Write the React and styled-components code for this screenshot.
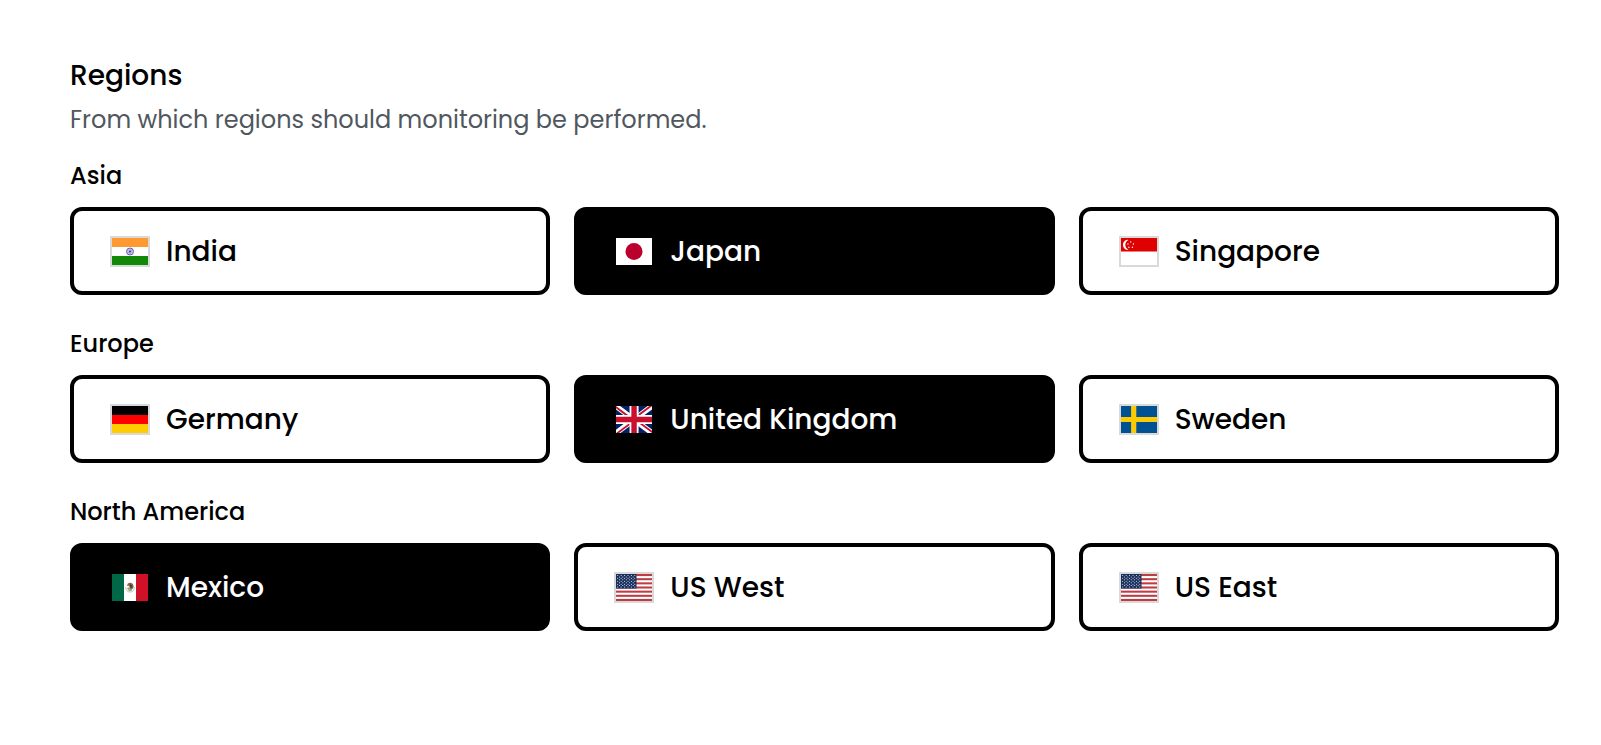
import React from "react";
import styled, { createGlobalStyle } from "styled-components";

const GlobalStyle = createGlobalStyle`
  *, *::before, *::after { box-sizing: border-box; }
  body {
    margin: 0;
    background: #fff;
    color: #000;
    font-family: Poppins, Inter, "Liberation Sans", sans-serif;
  }
`;

const Page = styled.main`
  width: 1601px;
  padding: 55px 42px 0 70px;
`;

const Header = styled.header`
  display: flex;
  flex-direction: column;
  gap: 5px;
  margin-bottom: 20px;
`;

const Title = styled.h1`
  margin: 0;
  font-size: 28px;
  line-height: 42px;
  font-weight: 500;
`;

const Description = styled.p`
  margin: 0;
  font-size: 24px;
  line-height: 36px;
  font-weight: 400;
  color: #50575e;
`;

const Groups = styled.div`
  display: flex;
  flex-direction: column;
  gap: 31px;
`;

const Group = styled.section`
  display: flex;
  flex-direction: column;
  gap: 13px;
`;

const GroupName = styled.h2`
  margin: 0;
  font-size: 24px;
  line-height: 36px;
  font-weight: 500;
`;

const Cards = styled.div`
  display: grid;
  grid-template-columns: repeat(3, 1fr);
  gap: 24px;
`;

const Card = styled.button`
  display: flex;
  align-items: center;
  gap: 16px;
  height: 88px;
  margin: 0;
  padding: 0 36px;
  border: 4px solid #000;
  border-radius: 12px;
  font: inherit;
  text-align: left;
  cursor: pointer;
  background: ${({ $selected }) => ($selected ? "#000" : "#fff")};
  color: ${({ $selected }) => ($selected ? "#fff" : "#000")};
`;

const FlagFrame = styled.span`
  display: block;
  flex: none;
  width: 40px;
  height: 31px;
  border: 2px solid ${({ $selected }) => ($selected ? "#000" : "#d9d9d9")};

  svg {
    display: block;
    width: 36px;
    height: 27px;
  }
`;

const CardLabel = styled.span`
  padding-top: 2px;
  font-size: 28px;
  line-height: 42px;
  font-weight: 500;
  white-space: nowrap;
`;

const India = () => (
  <svg viewBox="0 0 36 27">
    <path fill="#fff" d="M0 0h36v27H0z" />
    <path fill="#ff9932" d="M0 0h36v9H0z" />
    <path fill="#128807" d="M0 18h36v9H0z" />
    <circle cx="18" cy="13.5" r="3.5" fill="#d8d8f0" stroke="#5050a4" strokeWidth="0.9" />
    <circle cx="18" cy="13.5" r="2" fill="none" stroke="#8c8cc8" strokeWidth="1.5" strokeDasharray="0.5 0.55" />
    <circle cx="18" cy="13.5" r="1.1" fill="#3a3a9a" />
  </svg>
);

const Japan = () => (
  <svg viewBox="0 0 36 27">
    <path fill="#fff" d="M0 0h36v27H0z" />
    <circle cx="18" cy="13.5" r="8.5" fill="#bc002d" />
  </svg>
);

const Singapore = () => (
  <svg viewBox="0 0 36 27">
    <path fill="#fff" d="M0 0h36v27H0z" />
    <path fill="#df0000" d="M0 0h36v13.5H0z" />
    <path fill="#fff" d="M7.600 1.900a5 5 0 1 0 0 9.900 5.400 5.400 0 0 1 0-9.900z" />
    <g fill="#fff">
      <circle cx="9.600" cy="3.900" r="0.7" />
      <circle cx="12.400" cy="6" r="0.7" />
      <circle cx="11.400" cy="9.200" r="0.7" />
      <circle cx="7.900" cy="9.200" r="0.7" />
      <circle cx="6.900" cy="6" r="0.7" />
    </g>
  </svg>
);

const Germany = () => (
  <svg viewBox="0 0 36 27">
    <path fill="#000" d="M0 0h36v9H0z" />
    <path fill="#f00" d="M0 9h36v9H0z" />
    <path fill="#fc0" d="M0 18h36v9H0z" />
  </svg>
);

const UnitedKingdom = () => (
  <svg viewBox="0 0 640 480">
    <path fill="#012169" d="M0 0h640v480H0z" />
    <path
      fill="#fff"
      d="m75 0 244 181L562 0h78v62L400 241l240 178v61h-80L320 301 81 480H0v-60l239-178L0 64V0z"
    />
    <path
      fill="#c8102e"
      d="m424 281 216 159v40L369 281zm-184 20 6 35L54 480H0zM640 0v3L391 191l2-44L590 0zM0 0l239 176h-60L0 42z"
    />
    <path fill="#fff" d="M241 0v480h160V0zM0 160v160h640V160z" />
    <path fill="#c8102e" d="M0 193v96h640v-96zM273 0v480h96V0z" />
  </svg>
);

const Sweden = () => (
  <svg viewBox="0 0 36 27">
    <path fill="#005293" d="M0 0h36v27H0z" />
    <path fill="#fecb00" d="M10.100 0h5.200v27h-5.200zM0 10.900h36v5.200H0z" />
  </svg>
);

const Mexico = () => (
  <svg viewBox="0 0 36 27">
    <path fill="#fff" d="M0 0h36v27H0z" />
    <path fill="#006847" d="M0 0h12v27H0z" />
    <path fill="#ce1126" d="M24 0h12v27H24z" />
    <path fill="none" stroke="#a9bba6" strokeWidth="0.9" d="M13.600 13.300c.4 3.200 2.100 4.700 4.500 4.700s4-1.500 4.400-4.700" />
    <path fill="#8a6a44" d="M15.800 9.600c1.700-1.200 3.900-.9 5 .5 1.200 1.700 1 3.900-.4 4.800-1.300.9-2.700.5-3.700-.5l1.200-1.300-1.500-1.300-1.400.3z" />
    <path fill="#45443a" d="m18 9.800 2.700 2.100-.7 2.200-2.200-1.200z" />
    <path fill="#c99a4e" d="m14.800 14 1.900-.8 1.200 1.300-1.700 1z" />
    <path fill="#57908a" d="M15.900 15.600h4.300l-.8 1.200h-2.700z" />
  </svg>
);

const starRows = Array.from({ length: 9 }, (_, row) =>
  Array.from({ length: row % 2 ? 5 : 6 }, (_, col) => ({
    x: 1.71 * (2 * col + 1 + (row % 2)),
    y: 1.45 * (row + 1),
  }))
).flat();

const UnitedStates = () => (
  <svg viewBox="0 0 36 27">
    <path fill="#fff" d="M0 0h36v27H0z" />
    {[0, 2, 4, 6, 8, 10, 12].map((stripe) => (
      <rect key={stripe} y={(stripe * 27) / 13} width="36" height={27 / 13} fill="#bd3d44" />
    ))}
    <path fill="#192f5d" d="M0 0h20.520v14.540H0z" />
    {starRows.map(({ x, y }) => (
      <circle key={`${x}-${y}`} cx={x} cy={y} r="0.5" fill="#fff" />
    ))}
  </svg>
);

const continents = [
  {
    name: "Asia",
    regions: [
      { name: "India", Flag: India },
      { name: "Japan", Flag: Japan, selected: true },
      { name: "Singapore", Flag: Singapore },
    ],
  },
  {
    name: "Europe",
    regions: [
      { name: "Germany", Flag: Germany },
      { name: "United Kingdom", Flag: UnitedKingdom, selected: true },
      { name: "Sweden", Flag: Sweden },
    ],
  },
  {
    name: "North America",
    regions: [
      { name: "Mexico", Flag: Mexico, selected: true },
      { name: "US West", Flag: UnitedStates },
      { name: "US East", Flag: UnitedStates },
    ],
  },
];

export default function App() {
  return (
    <>
      <GlobalStyle />
      <Page>
        <Header>
          <Title>Regions</Title>
          <Description>From which regions should monitoring be performed.</Description>
        </Header>
        <Groups>
          {continents.map((continent) => (
            <Group key={continent.name}>
              <GroupName>{continent.name}</GroupName>
              <Cards>
                {continent.regions.map(({ name, Flag, selected }) => (
                  <Card key={name} type="button" $selected={selected} aria-pressed={!!selected}>
                    <FlagFrame $selected={selected}>
                      <Flag />
                    </FlagFrame>
                    <CardLabel>{name}</CardLabel>
                  </Card>
                ))}
              </Cards>
            </Group>
          ))}
        </Groups>
      </Page>
    </>
  );
}
